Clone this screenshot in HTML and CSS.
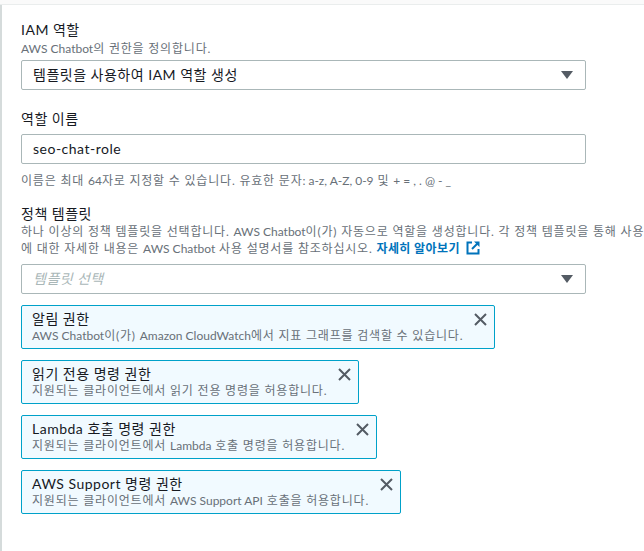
FILE: index.html
```html
<!DOCTYPE html>
<html lang="ko">
<head>
    <meta charset="UTF-8">
    <meta name="viewport" content="width=device-width, initial-scale=1.0">
    <title>IAM 역할</title>
    <link rel="stylesheet" href="styles.css">
</head>
<body>
    <div class="topbar"></div>
    <div class="panel">
        <div class="field role">
            <label class="label">IAM 역할</label>
            <p class="desc"><span class="en">AWS Chatbot</span>의 권한을 정의합니다.</p>
            <div class="select">
                <span>템플릿을 사용하여 IAM 역할 생성</span>
                <span class="caret"></span>
            </div>
        </div>

        <div class="field name">
            <label class="label">역할 이름</label>
            <div class="input">seo-chat-role</div>
            <p class="hint">이름은 최대 <span class="en">64</span>자로 지정할 수 있습니다. 유효한 문자<span class="en">: a-z, A-Z, 0-9</span> 및 <span class="en">+ = , . @ - _</span></p>
        </div>

        <div class="field">
            <label class="label">정책 템플릿</label>
            <p class="desc wide">
                <span class="line">하나 이상의 정책 템플릿을 선택합니다. <span class="en">AWS Chatbot</span>이(가) 자동으로 역할을 생성합니다. 각 정책 템플릿을 통해 사용자가 역할에 부여할 권한을 정의합니다. 각 권한</span>
                <span class="line">에 대한 자세한 내용은 <span class="en">AWS Chatbot</span> 사용 설명서를 참조하십시오. <a class="link" href="#">자세히 알아보기
                    <svg class="ext" width="14" height="14" viewBox="0 0 14 14"><path d="M6 1.5H1.5v11h11V8" fill="none" stroke="#0073bb" stroke-width="2"/><path d="M8 0.5h5.5V6z" fill="#0073bb"/><path d="M12.5 1.5L6 8" stroke="#0073bb" stroke-width="2"/></svg></a></span>
            </p>
            <div class="select placeholder">
                <span>템플릿 선택</span>
                <span class="caret"></span>
            </div>
        </div>

        <div class="tokens">
            <div class="token">
                <div class="token-text">
                    <div class="token-title">알림 권한</div>
                    <div class="token-desc"><span class="en">AWS Chatbot</span>이(가) <span class="en">Amazon CloudWatch</span>에서 지표 그래프를 검색할 수 있습니다.</div>
                </div>
                <button class="dismiss"><svg width="13" height="13" viewBox="0 0 13 13"><path d="M1 1l11 11M12 1L1 12" stroke="#545b64" stroke-width="2"/></svg></button>
            </div>
            <div class="token">
                <div class="token-text">
                    <div class="token-title">읽기 전용 명령 권한</div>
                    <div class="token-desc">지원되는 클라이언트에서 읽기 전용 명령을 허용합니다.</div>
                </div>
                <button class="dismiss"><svg width="13" height="13" viewBox="0 0 13 13"><path d="M1 1l11 11M12 1L1 12" stroke="#545b64" stroke-width="2"/></svg></button>
            </div>
            <div class="token">
                <div class="token-text">
                    <div class="token-title">Lambda 호출 명령 권한</div>
                    <div class="token-desc">지원되는 클라이언트에서 <span class="en">Lambda</span> 호출 명령을 허용합니다.</div>
                </div>
                <button class="dismiss"><svg width="13" height="13" viewBox="0 0 13 13"><path d="M1 1l11 11M12 1L1 12" stroke="#545b64" stroke-width="2"/></svg></button>
            </div>
            <div class="token">
                <div class="token-text">
                    <div class="token-title">AWS Support 명령 권한</div>
                    <div class="token-desc">지원되는 클라이언트에서 <span class="en">AWS Support API</span> 호출을 허용합니다.</div>
                </div>
                <button class="dismiss"><svg width="13" height="13" viewBox="0 0 13 13"><path d="M1 1l11 11M12 1L1 12" stroke="#545b64" stroke-width="2"/></svg></button>
            </div>
        </div>
    </div>
</body>
</html>
```

FILE: styles.css
```css
html, body {
    margin: 0;
    overflow: hidden;
    background: white;
}
body {
    font-family: Lato, "Noto Sans CJK KR", sans-serif;
    color: #16191f;
    font-size: 14px;
    letter-spacing: 0.5px;
}
.topbar {
    height: 4px;
    background-color: #fafafa;
    border-bottom: 1px solid #eaeded;
}
.panel {
    border-left: 2px solid #d5dbdb;
    padding: 14px 0 0 19px;
    height: 546px;
    box-sizing: border-box;
}
.field {
    width: 565px;
}
.field.role {
    margin-bottom: 18px;
}
.field.name {
    margin-bottom: 14px;
}
.label {
    display: block;
    font-size: 14px;
    line-height: 22px;
}
.desc, .hint {
    margin: 0;
    font-size: 12px;
    line-height: 16px;
    color: #687078;
    letter-spacing: 0.8px;
}
.desc {
    margin-bottom: 3px;
}
.hint {
    margin-top: 9px;
}
.desc.wide {
    line-height: 17px;
    margin-top: -2px;
    margin-bottom: 7px;
}
.desc .line {
    display: block;
    white-space: nowrap;
}
.en {
    letter-spacing: 0;
}
.link {
    color: #0073bb;
    font-weight: bold;
    text-decoration: none;
    letter-spacing: 0.4px;
}
.ext {
    vertical-align: -2px;
    margin-left: 3px;
}
.select, .input {
    box-sizing: border-box;
    height: 30px;
    border: 1px solid #aab7b8;
    border-radius: 2px;
    padding: 0 12px 0 11px;
    display: flex;
    align-items: center;
    justify-content: space-between;
    line-height: 28px;
}
.input {
    margin-top: 4px;
}
.placeholder {
    color: #aab7b8;
    font-style: italic;
}
.caret {
    width: 0;
    height: 0;
    border-left: 6px solid transparent;
    border-right: 6px solid transparent;
    border-top: 8px solid #545b64;
}
.tokens {
    display: flex;
    flex-direction: column;
    align-items: flex-start;
    gap: 11px;
    margin-top: 11px;
}
.token {
    display: flex;
    align-items: flex-start;
    border: 1px solid #00a1c9;
    border-radius: 2px;
    background-color: #f1faff;
    padding: 4px 7px 4px 10px;
}
.token-title {
    font-size: 14px;
    line-height: 18px;
}
.token-desc {
    font-size: 12px;
    line-height: 16px;
    color: #687078;
    letter-spacing: 0.8px;
}
.dismiss {
    background: none;
    border: none;
    padding: 3px 0 0 0;
    margin-left: 11px;
    cursor: pointer;
    line-height: 0;
}
```
